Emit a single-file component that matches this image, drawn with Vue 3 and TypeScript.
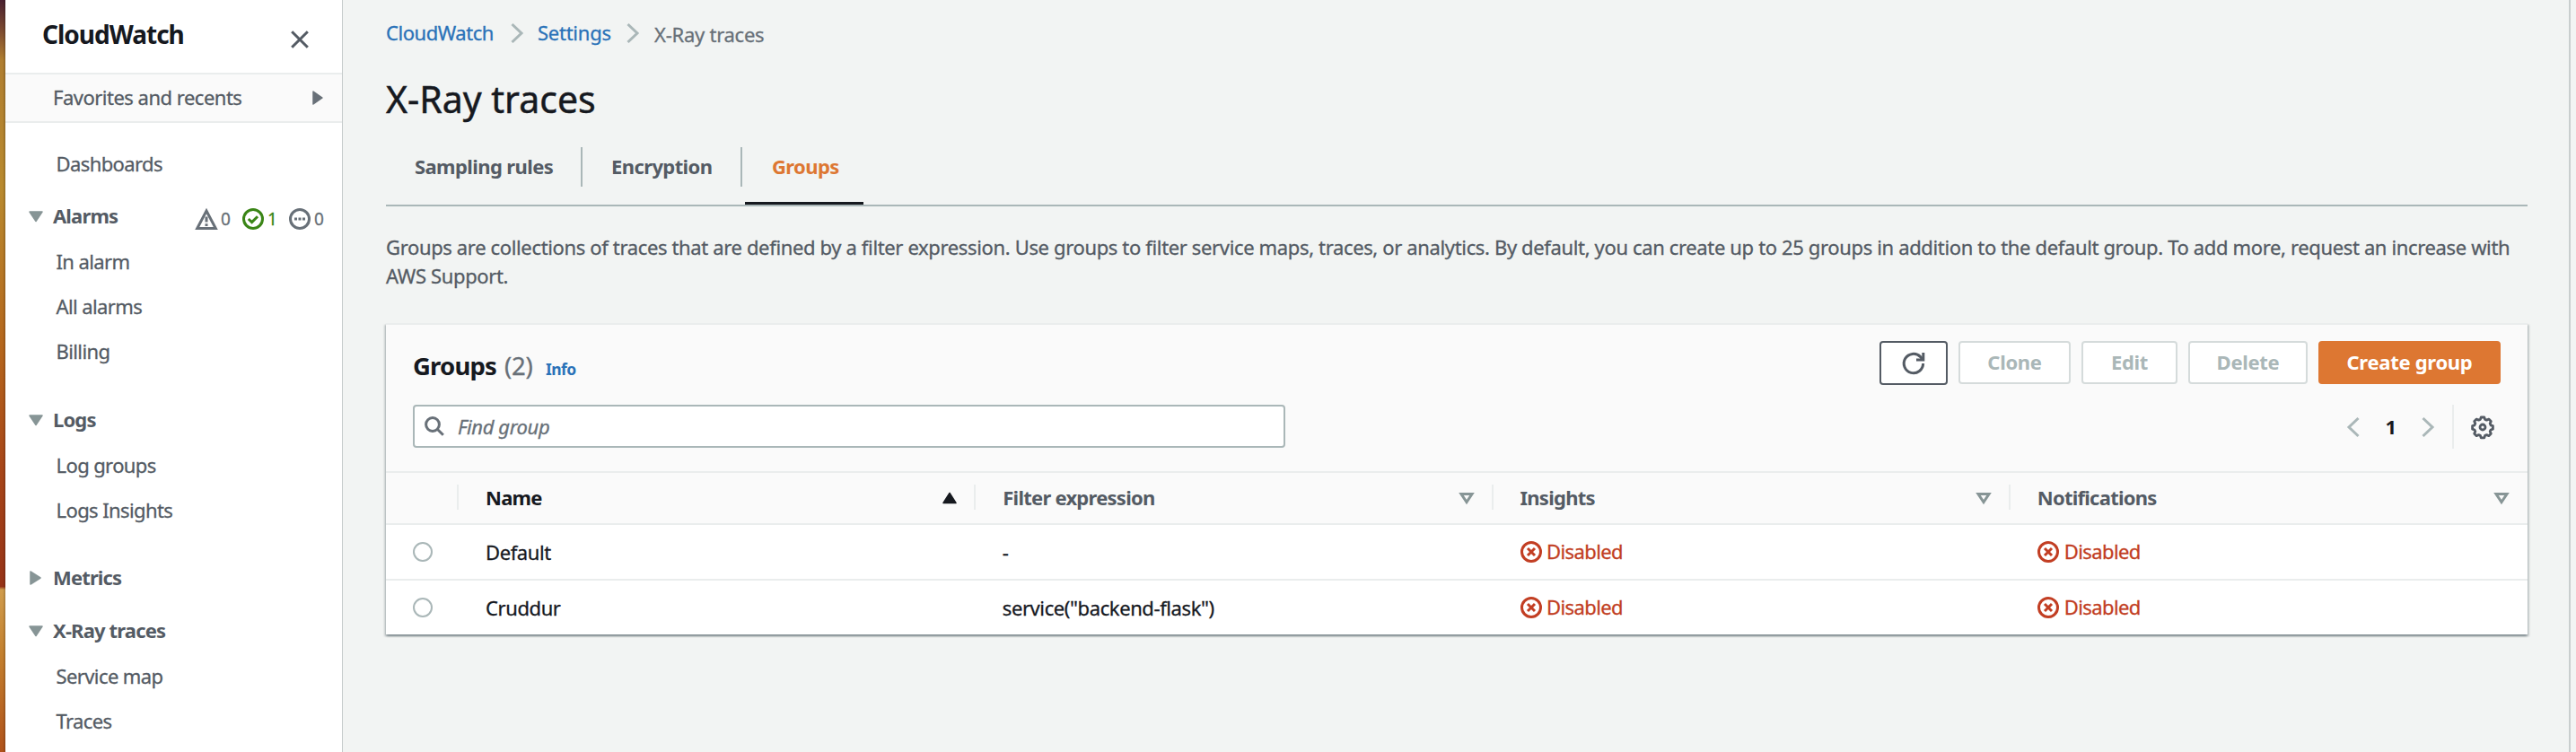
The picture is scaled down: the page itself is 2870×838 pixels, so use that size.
<script setup lang="ts">
interface NavSection {
  title: string
  open: boolean
  alarms?: boolean
  items: string[]
}
interface Column {
  label: string
  sorted: boolean
}
interface Group {
  name: string
  filter: string
  insights: string
  notifications: string
}

const sections: NavSection[] = [
  { title: 'Alarms', open: true, alarms: true, items: ['In alarm', 'All alarms', 'Billing'] },
  { title: 'Logs', open: true, items: ['Log groups', 'Logs Insights'] },
  { title: 'Metrics', open: false, items: [] },
  { title: 'X-Ray traces', open: true, items: ['Service map', 'Traces'] },
]
const tabs: string[] = ['Sampling rules', 'Encryption', 'Groups']
const activeTab = 'Groups'
const columns: Column[] = [
  { label: 'Name', sorted: true },
  { label: 'Filter expression', sorted: false },
  { label: 'Insights', sorted: false },
  { label: 'Notifications', sorted: false },
]
const groups: Group[] = [
  { name: 'Default', filter: '-', insights: 'Disabled', notifications: 'Disabled' },
  { name: 'Cruddur', filter: 'service("backend-flask")', insights: 'Disabled', notifications: 'Disabled' },
]
</script>

<template>
  <div class="page">
    <div class="backdrop"></div>
    <aside class="sidebar">
      <header class="side-head">
        <h2>CloudWatch</h2>
        <svg class="close" viewBox="0 0 20 20"><path d="M1.2 1.2 18.8 18.8M18.8 1.2 1.2 18.8" /></svg>
      </header>
      <div class="favorites">
        <span>Favorites and recents</span>
        <svg class="fav-arrow" viewBox="0 0 12 16"><path d="M1 1 11 8 1 15Z" /></svg>
      </div>
      <nav>
        <a class="item first">Dashboards</a>
        <section v-for="s in sections" :key="s.title" :class="{ closed: !s.open }">
          <div class="section-head">
            <svg class="caret" viewBox="0 0 16 16">
              <path v-if="s.open" d="M1 3H15L8 13.5Z" />
              <path v-else d="M2 1V15L13 8Z" />
            </svg>
            <b>{{ s.title }}</b>
            <div v-if="s.alarms" class="counts">
              <svg viewBox="0 0 24 24"><path d="M12 3 22.3 22.5H1.7Z" /><path d="M12 9.5v6M12 17.2v2.8" stroke-width="3" /></svg>
              <span>0</span>
              <svg class="ok" viewBox="0 0 24 24"><circle cx="12" cy="12" r="10.5" /><path d="m6.8 12 3.8 3.6 6.4-6.4" /></svg>
              <span class="ok">1</span>
              <svg viewBox="0 0 24 24"><circle cx="12" cy="12" r="10.5" /><path d="M6 12h3M10.5 12h3M15 12h3" /></svg>
              <span>0</span>
            </div>
          </div>
          <a v-for="i in s.items" :key="i" class="item">{{ i }}</a>
        </section>
      </nav>
    </aside>

    <main>
      <div class="crumbs">
        <a class="c1">CloudWatch</a>
        <svg class="chev" viewBox="0 0 14 22"><path d="M1.5 1 12 11 1.5 21" /></svg>
        <a class="c2">Settings</a>
        <svg class="chev" viewBox="0 0 14 22"><path d="M1.5 1 12 11 1.5 21" /></svg>
        <span>X-Ray traces</span>
      </div>
      <h1>X-Ray traces</h1>
      <div class="tabs">
        <div v-for="t in tabs" :key="t" class="tab" :class="{ active: t === activeTab }"><b>{{ t }}</b></div>
      </div>
      <p class="intro">
        Groups are collections of traces that are defined by a filter expression. Use groups to filter service maps, traces, or analytics. By default, you can create up to 25 groups in addition to the default group. To add more, request an increase with<br />AWS Support.
      </p>

      <div class="card">
        <div class="toolbar">
          <div class="top">
            <h3>Groups</h3><span class="count">(2)</span><a class="info">Info</a>
            <div class="buttons">
              <button class="btn refresh">
                <svg viewBox="0 0 24 24"><path d="M22.6 12A10.7 10.7 0 1 1 19.6 4.6L21.5 7" /><path d="M22.8 0V8H15" /></svg>
              </button>
              <button class="btn clone">Clone</button>
              <button class="btn edit">Edit</button>
              <button class="btn delete">Delete</button>
              <button class="btn primary">Create group</button>
            </div>
          </div>
          <div class="bottom">
            <div class="search">
              <svg viewBox="0 0 22 22"><circle cx="9" cy="9" r="7.4" /><path d="m14.2 14.2 6.6 6.6" /></svg>
              <i>Find group</i>
            </div>
            <div class="pager">
              <svg class="chev" viewBox="0 0 14 22"><path d="M12.5 1 2 11 12.5 21" /></svg>
              <b>1</b>
              <svg class="chev" viewBox="0 0 14 22"><path d="M1.5 1 12 11 1.5 21" /></svg>
              <div class="gear">
                <svg viewBox="0 0 24 24">
                  <path d="M10.2 1.4h3.6l.8 2.4 1.9.8 2.3-1.1 2.5 2.5-1.1 2.3.8 1.9 2.4.8v3.6l-2.4.8-.8 1.9 1.1 2.3-2.5 2.5-2.3-1.1-1.9.8-.8 2.4h-3.6l-.8-2.4-1.9-.8-2.3 1.1-2.5-2.5 1.1-2.3-.8-1.9-2.4-.8V11l2.4-.8.8-1.9L2.7 6l2.5-2.5 2.3 1.1 1.9-.8Z" transform="translate(0 -.4)" />
                  <circle cx="12" cy="12" r="3" />
                </svg>
              </div>
            </div>
          </div>
        </div>
        <div class="row head">
          <div class="pick"></div>
          <div v-for="c in columns" :key="c.label" class="cell" :class="{ sorted: c.sorted }">
            <b>{{ c.label }}</b>
            <svg viewBox="0 0 16 14">
              <path v-if="c.sorted" class="solid" d="M8 1.5 15 12.5H1Z" />
              <path v-else d="M2 2.5H14L8 11.5Z" />
            </svg>
          </div>
        </div>
        <div v-for="g in groups" :key="g.name" class="row">
          <div class="pick"><span class="radio"></span></div>
          <div class="cell">{{ g.name }}</div>
          <div class="cell filter">{{ g.filter }}</div>
          <div v-for="(s, i) in [g.insights, g.notifications]" :key="i" class="cell status">
            <svg viewBox="0 0 24 24"><circle cx="12" cy="12" r="10.5" /><path d="m8 8 8 8M16 8l-8 8" /></svg>
            <span>{{ s }}</span>
          </div>
        </div>
      </div>
    </main>
    <div class="edge"></div>
  </div>
</template>

<style>
html,
body {
  margin: 0;
  overflow: hidden;
}
</style>

<style scoped>
.page {
  display: flex;
  width: 2870px;
  height: 838px;
  overflow: hidden;
  background: #f2f4f3;
  color: #16191f;
  font: 400 22px/32px "Noto Sans", "Open Sans", sans-serif;
  letter-spacing: -0.5px;
  -webkit-text-stroke: 0.3px currentColor;
}
* {
  box-sizing: border-box;
}
b,
h2,
h3,
.btn,
.info {
  -webkit-text-stroke-width: 0;
}
svg {
  display: block;
  flex: none;
  fill: none;
  stroke: currentColor;
  stroke-width: 3;
  overflow: visible;
}
.backdrop {
  flex: none;
  width: 6px;
  background: linear-gradient(90deg, rgba(0, 0, 0, 0) 50%, rgba(0, 0, 0, 0.2)),
    linear-gradient(#4a2030, #7c4a30 4%, #b07e30 8%, #b98a2e 25%, #b5651c 47%, #a84618 62%, #963317 78%, #d09c4c 78.4%, #c4802e 87%, #b0521a);
}
.sidebar {
  flex: none;
  width: 376px;
  border-right: 1px solid #c6cbcb;
  background: #fff;
  color: #545b64;
}
.side-head {
  display: flex;
  align-items: flex-start;
  justify-content: space-between;
  height: 81px;
  padding: 22px 37px 0 41px;
}
h1,
h2,
h3 {
  margin: 0;
}
h2 {
  color: #16191f;
  font-size: 28px;
  line-height: 32px;
  letter-spacing: -1px;
}
.close {
  width: 20px;
  height: 20px;
  margin-top: 12px;
}
.favorites {
  display: flex;
  align-items: center;
  justify-content: space-between;
  height: 56px;
  padding: 0 21px 0 53px;
  border: solid #eaeded;
  border-width: 2px 0;
  background: #fafafa;
}
.favorites span {
  margin-bottom: 2px;
}
.fav-arrow {
  width: 12px;
  height: 16px;
  color: #687078;
  fill: currentColor;
  stroke-width: 1.5;
  stroke-linejoin: round;
}
nav {
  padding-top: 20px;
}
.item {
  display: flex;
  align-items: center;
  height: 50px;
  padding-left: 56.5px;
  letter-spacing: -0.6px;
}
.first {
  margin-bottom: 8px;
}
section {
  margin-bottom: 26px;
}
.closed {
  margin-bottom: 8px;
}
section:nth-of-type(2) {
  margin-bottom: 25px;
}
.section-head {
  display: flex;
  align-items: center;
  height: 51px;
  padding: 0 19px 0 26px;
}
.section-head b {
  margin: 0 0 2px 11px;
  letter-spacing: -0.85px;
}
.caret {
  width: 16px;
  height: 16px;
  color: #879596;
  fill: currentColor;
  stroke-width: 1.5;
  stroke-linejoin: round;
}
.counts {
  display: flex;
  align-items: center;
  margin: 6px 0 0 auto;
  color: #687078;
  font-size: 19px;
}
.counts svg {
  width: 24px;
  height: 24px;
}
.counts span {
  width: 28px;
  padding-left: 4px;
}
.counts span:last-child {
  width: 16px;
}
.counts .ok {
  color: #3a8516;
}

main {
  width: 2386px;
  margin-left: 48px;
}
.crumbs {
  display: flex;
  align-items: center;
  height: 32px;
  margin-top: 21px;
  color: #687078;
  letter-spacing: -0.25px;
}
.crumbs a {
  margin-bottom: 2px;
  color: #2a72b8;
}
.c1 {
  width: 139px;
  letter-spacing: -0.45px;
}
.c2 {
  width: 99px;
  margin-left: 16px;
  letter-spacing: -0.25px;
}
.crumbs span {
  margin: 1px 0 0 17px;
}
.chev {
  width: 14px;
  height: 22px;
  color: #aab7b8;
}
h1 {
  margin-top: 27px;
  font-size: 41px;
  font-weight: 400;
  line-height: 60px;
  letter-spacing: 0;
  -webkit-text-stroke-width: 0.5px;
}
.tabs {
  display: flex;
  height: 90px;
  border-bottom: 2px solid #aab7b8;
  color: #545b64;
}
.tab {
  position: relative;
  height: 88px;
  padding: 29px 0 0 30px;
  letter-spacing: -0.6px;
}
.tab b {
  display: block;
}
.tab:nth-child(1) {
  width: 219px;
  padding-left: 32px;
}
.tab:nth-child(2) {
  width: 178px;
  padding-left: 32px;
}
.tab:nth-child(3) {
  width: 132px;
  margin-left: 3px;
}
.tab:not(:last-child)::after {
  content: "";
  position: absolute;
  top: 24px;
  right: 0;
  width: 2px;
  height: 44px;
  background: #aab7b8;
}
.active {
  border-bottom: 3px solid #16191f;
  color: #dd7732;
}
.intro {
  height: 64px;
  margin: 29px 0 0;
  color: #545b64;
  letter-spacing: -0.355px;
  white-space: nowrap;
}
.card {
  margin-top: 37px;
  border-top: 2px solid #eaeded;
  background: #fff;
  box-shadow: 0 2px 2px rgba(0, 28, 36, 0.3), 2px 2px 2px rgba(0, 28, 36, 0.15), -2px 2px 2px rgba(0, 28, 36, 0.15);
}
.toolbar {
  height: 163px;
  padding: 18px 30px 0 30px;
  background: #fafafa;
}
.top {
  display: flex;
  align-items: baseline;
  height: 71px;
}
h3,
.count {
  padding-top: 10px;
  font-size: 27.5px;
  line-height: 36px;
}
h3 {
  width: 102px;
  letter-spacing: -0.8px;
}
.count {
  width: 46px;
  color: #687078;
  letter-spacing: -0.2px;
}
.info {
  color: #2a72b8;
  font-size: 17.5px;
  font-weight: 700;
  letter-spacing: -0.6px;
}
.buttons {
  display: flex;
  gap: 12px;
  align-self: flex-start;
  margin-left: auto;
}
.btn {
  display: flex;
  align-items: center;
  justify-content: center;
  height: 48px;
  padding: 0 0 2px;
  border: 2px solid #d5dbdb;
  border-radius: 4px;
  background: #fff;
  color: #aab7b8;
  font: inherit;
  font-weight: 700;
  letter-spacing: -0.3px;
}
.refresh {
  width: 76px;
  height: 49px;
  padding: 0;
  border-color: #545b64;
  color: #545b64;
}
.refresh svg {
  width: 24px;
  height: 24px;
}
.clone {
  width: 125px;
}
.edit {
  width: 107px;
}
.delete {
  width: 133px;
}
.primary {
  width: 203px;
  border-color: #dd7732;
  background: #dd7732;
  color: #fff;
}
.bottom {
  display: flex;
  justify-content: space-between;
}
.search {
  display: flex;
  align-items: center;
  width: 972px;
  height: 48px;
  padding-left: 11px;
  border: 2px solid #aab7b8;
  border-radius: 4px;
  background: #fff;
  color: #687078;
}
.search svg {
  width: 22px;
  height: 22px;
}
.search i {
  margin-left: 15px;
  letter-spacing: -0.4px;
}
.pager {
  display: flex;
  align-items: center;
  height: 49px;
}
.pager b {
  width: 69px;
  margin-bottom: 1px;
  text-align: center;
}
.gear {
  display: flex;
  align-items: center;
  justify-content: flex-end;
  width: 46px;
  height: 49px;
  margin: 0 8px 0 20px;
  border-left: 2px solid #eaeded;
  color: #545b64;
}
.gear svg {
  width: 24px;
  height: 24px;
  stroke-width: 2.8;
  stroke-linejoin: round;
}
.row {
  display: flex;
  align-items: center;
  height: 62px;
  border-top: 2px solid #eaeded;
}
.pick {
  display: flex;
  width: 81px;
  padding-left: 30px;
}
.radio {
  width: 22px;
  height: 22px;
  border: 2px solid #aab7b8;
  border-radius: 50%;
}
.cell {
  display: flex;
  flex: 1;
  align-items: center;
  padding-left: 30px;
  letter-spacing: -0.4px;
}
.head {
  height: 58px;
  background: #fafafa;
  color: #545b64;
}
.head .cell {
  position: relative;
  justify-content: space-between;
  padding-right: 21.5px;
  letter-spacing: -0.75px;
}
.head .cell::before {
  content: "";
  position: absolute;
  left: -2px;
  top: 2px;
  width: 2px;
  height: 28px;
  background: #eaeded;
}
.head b {
  margin-bottom: 2px;
}
.head svg {
  width: 16px;
  height: 14px;
  color: #879596;
}
.head .sorted,
.head .sorted svg {
  color: #16191f;
}
.solid {
  fill: currentColor;
  stroke-width: 1.5;
  stroke-linejoin: round;
}
.row .status {
  padding-left: 31px;
  color: #c23e23;
  letter-spacing: -0.6px;
}
.status svg {
  width: 24px;
  height: 24px;
}
.status span {
  margin: 0 0 2px 5.5px;
}
.edge {
  width: 2px;
  margin-left: auto;
  margin-right: 6px;
  background: #c9cece;
}
</style>
